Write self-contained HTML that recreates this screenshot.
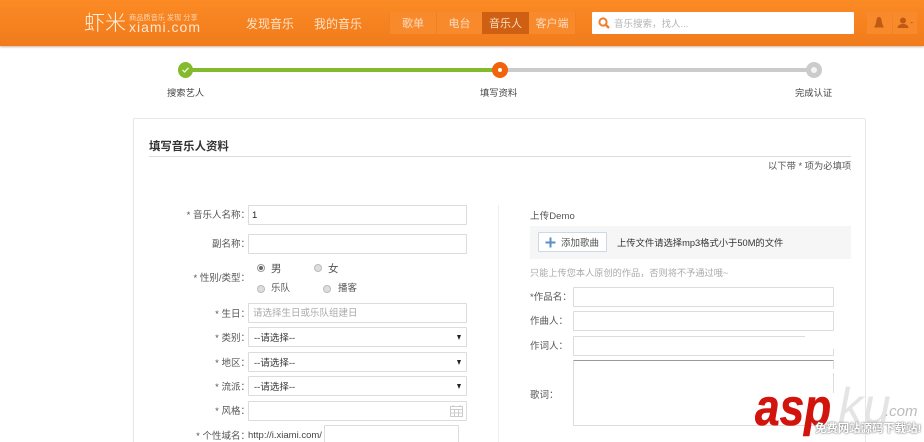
<!DOCTYPE html>
<html lang="zh"><head><meta charset="utf-8"><style>
*{box-sizing:border-box}
html,body{margin:0;padding:0;width:924px;height:442px;overflow:hidden;background:#fff;font-family:"Liberation Sans","Noto Sans CJK SC",sans-serif;color:#444;font-size:10px}
#p{position:relative;width:924px;height:442px;overflow:hidden;background:#fff}
.a{position:absolute;white-space:nowrap}
.hd{position:absolute;left:0;top:0;width:924px;height:46px;background:linear-gradient(#fb8a24,#f07b1c);box-shadow:0 1px 2px rgba(150,90,40,.45)}
.nav{color:#fde3c8;font-size:12px;line-height:16px;top:16px}
.tab{top:12px;height:22px;line-height:24px;text-align:center;font-size:11px;color:#fbdcc0;background:#f98a2c}
.lab{font-size:9.5px;line-height:12px;color:#555;text-align:right;width:86px;left:164px}
.in{position:absolute;background:#fff;border:1px solid #dcdcdc;border-radius:1px;height:20px}
.sel{font-size:9.5px;line-height:21px;color:#333;padding-left:5px}
.sel:after{content:"";position:absolute;right:5px;top:7px;border:2.500px solid transparent;border-top:5px solid #222;border-bottom:0}
.r{position:absolute;width:8px;height:8px;border-radius:50%;background:#ddd;border:1px solid #bbb}
.t{font-size:9.5px;line-height:12px;color:#555}
</style></head><body><div id="p">
<div class="hd"></div>
<div class="a" style="left:84px;top:11px;font-size:21px;line-height:26px;color:#fff0e0;font-weight:300">虾米</div>
<div class="a" style="left:129px;top:13px;font-size:7.200px;line-height:9px;color:#fcd9b8">商品质音乐 发现 分享</div>
<div class="a" style="left:129px;top:20px;font-size:14px;line-height:14px;color:#fde6cf;letter-spacing:1px">xiami.com</div>
<div class="a nav" style="left:246px">发现音乐</div>
<div class="a nav" style="left:314px">我的音乐</div>
<div class="a" style="left:389px;top:12px;width:187px;height:22px;background:#f37f20"></div>
<div class="a tab" style="left:390px;width:46px">歌单</div>
<div class="a tab" style="left:437px;width:45px">电台</div>
<div class="a tab" style="left:482px;width:47px;background:#cf5f12;color:#fbdcc0">音乐人</div>
<div class="a tab" style="left:529px;width:46px">客户端</div>
<div class="a" style="left:592px;top:12px;width:262px;height:22px;background:#fff;border-radius:1px"></div>
<svg class="a" style="left:597px;top:16px" width="14" height="14" viewBox="0 0 14 14"><circle cx="6" cy="6" r="3.600" fill="none" stroke="#f08030" stroke-width="2"/><path d="M8.600 8.600L12 12" stroke="#f08030" stroke-width="2.400"/></svg>
<div class="a" style="left:614px;top:19px;font-size:9.500px;line-height:12px;color:#b4b4b4">音乐搜索，找人...</div>
<div class="a" style="left:867px;top:12px;width:25px;height:22px;background:#f98a2c"></div>
<div class="a" style="left:893px;top:12px;width:24px;height:22px;background:#f98a2c"></div>
<svg class="a" style="left:872px;top:16px" width="14" height="14" viewBox="0 0 14 14"><path d="M7 1C5 1 4.500 3 4.200 5.500 4 8 3 9.500 2 11.500H12C11 9.500 10 8 9.800 5.500 9.500 3 9 1 7 1Z" fill="#bf5a14"/></svg>
<svg class="a" style="left:896px;top:16px" width="18" height="14" viewBox="0 0 18 14"><circle cx="7" cy="4.500" r="3" fill="#bf5a14"/><path d="M1.500 12C2 9 4 8 7 8s5 1 5.500 4Z" fill="#bf5a14"/><path d="M14.500 6h2.500l-1.250 1.500Z" fill="#bf5a14"/></svg>

<div class="a" style="left:190px;top:68px;width:312px;height:4px;background:#84bb2c"></div>
<div class="a" style="left:502px;top:68px;width:312px;height:4px;background:#cbcbcb"></div>
<div class="a" style="left:178px;top:62px;width:15px;height:16px;border-radius:50%;background:#84bb2c"></div>
<svg class="a" style="left:181px;top:66px" width="9" height="8" viewBox="0 0 9 8"><path d="M1.500 4L3.600 6 7.500 1.800" fill="none" stroke="#eef6dd" stroke-width="1.300"/></svg>
<div class="a" style="left:492px;top:62px;width:16px;height:16px;border-radius:50%;background:#f0640c"></div>
<div class="a" style="left:498px;top:68px;width:4px;height:4px;border-radius:50%;background:#fff"></div>
<div class="a" style="left:806px;top:62px;width:16px;height:16px;border-radius:50%;background:#cbcbcb"></div>
<div class="a" style="left:811px;top:67px;width:6px;height:6px;border-radius:50%;background:#f4f4f4"></div>
<div class="a t" style="left:167px;top:87px;color:#444;font-size:9.300px">搜索艺人</div>
<div class="a t" style="left:480px;top:87px;color:#444;font-size:9.300px">填写资料</div>
<div class="a t" style="left:795px;top:87px;color:#444;font-size:9.300px">完成认证</div>

<div class="a" style="left:133px;top:118px;width:733px;height:340px;border:1px solid #e6e6e6;border-radius:2px"></div>
<div class="a" style="left:149px;top:140px;font-size:11.400px;line-height:14px;color:#333;font-weight:bold">填写音乐人资料</div>
<div class="a" style="left:149px;top:156px;width:702px;height:1px;background:#ddd"></div>
<div class="a t" style="left:768px;top:160px;font-size:9.300px">以下带 * 项为必填项</div>
<div class="a" style="left:498px;top:205px;width:1px;height:237px;background:#eee"></div>

<div class="a lab" style="top:210px">* 音乐人名称：</div>
<div class="in" style="left:248px;top:205px;width:219px"></div>
<div class="a" style="left:252px;top:210px;font-size:9.500px;line-height:12px;color:#222">1</div>
<div class="a lab" style="top:239px">副名称：</div>
<div class="in" style="left:248px;top:234px;width:219px"></div>
<div class="a lab" style="top:273px">* 性别/类型：</div>
<div class="r" style="left:257px;top:264px;background:#fff;border-color:#999"></div>
<div class="a" style="left:259px;top:266px;width:4px;height:4px;border-radius:50%;background:#666"></div>
<div class="a t" style="left:271px;top:263px;font-size:10.500px">男</div>
<div class="r" style="left:314px;top:264px"></div>
<div class="a t" style="left:328px;top:263px;font-size:10.500px">女</div>
<div class="r" style="left:257px;top:285px"></div>
<div class="a t" style="left:271px;top:283px">乐队</div>
<div class="r" style="left:323px;top:285px"></div>
<div class="a t" style="left:338px;top:283px">播客</div>
<div class="a lab" style="top:309px">* 生日：</div>
<div class="in" style="left:248px;top:303px;width:219px;font-size:9.500px;line-height:19px;color:#aaa;padding-left:4px">请选择生日或乐队组建日</div>
<div class="a lab" style="top:333px">* 类别：</div>
<div class="in sel" style="left:248px;top:327px;width:219px">--请选择--</div>
<div class="a lab" style="top:358px">* 地区：</div>
<div class="in sel" style="left:248px;top:352px;width:219px">--请选择--</div>
<div class="a lab" style="top:382px">* 流派：</div>
<div class="in sel" style="left:248px;top:376px;width:219px">--请选择--</div>
<div class="a lab" style="top:406px">* 风格：</div>
<div class="in" style="left:248px;top:401px;width:219px"></div>
<svg class="a" style="left:449px;top:404px" width="15" height="14" viewBox="0 0 15 14"><path d="M1.500 2.500h12v10h-12zM1.500 5.500h12M5.500 5.500v7M9.500 5.500v7M1.500 9h12M4 1v2M11 1v2" fill="none" stroke="#ccc"/></svg>
<div class="a lab" style="top:431px">* 个性域名：</div>
<div class="a" style="left:248px;top:430px;font-size:9.500px;line-height:12px;color:#444">http://i.xiami.com/</div>
<div class="in" style="left:324px;top:425px;width:135px;height:24px"></div>

<div class="a t" style="left:530px;top:211px;letter-spacing:.1px">上传Demo</div>
<div class="a" style="left:530px;top:226px;width:321px;height:33px;background:#f6f6f6"></div>
<div class="a" style="left:538px;top:232px;width:69px;height:20px;background:#fff;border:1px solid #cdd8e6;border-radius:1px"></div>
<svg class="a" style="left:545px;top:237px" width="11" height="11" viewBox="0 0 11 11"><path d="M5.500 .5v10M.5 5.500h10" stroke="#5b8fc4" stroke-width="2"/></svg>
<div class="a t" style="left:561px;top:238px">添加歌曲</div>
<div class="a t" style="left:617px;top:237px;color:#333;font-size:9.300px">上传文件请选择mp3格式小于50M的文件</div>
<div class="a t" style="left:530px;top:267px;color:#aaa;font-size:9.200px">只能上传您本人原创的作品，否则将不予通过哦~</div>
<div class="a t" style="left:530px;top:292px">*作品名：</div>
<div class="in" style="left:573px;top:287px;width:261px"></div>
<div class="a t" style="left:530px;top:316px">作曲人：</div>
<div class="in" style="left:573px;top:311px;width:261px"></div>
<div class="a t" style="left:530px;top:341px">作词人：</div>
<div class="in" style="left:573px;top:336px;width:261px"></div>
<div class="a t" style="left:530px;top:390px">歌词：</div>
<div class="in" style="left:573px;top:360px;width:261px;height:66px;border-top-color:#999"></div>
<div class="a" style="left:805px;top:335px;width:30px;height:2px;background:#fff"></div>
<div class="a" style="left:830px;top:337px;width:6px;height:12px;background:#fff"></div>
<div class="a" style="left:830px;top:369px;width:6px;height:4px;background:#fff"></div>
<div class="a" style="left:830px;top:393px;width:6px;height:34px;background:#fff"></div>

<div class="a" style="left:755px;top:381px;font-size:52px;line-height:54px;font-weight:bold;font-style:italic;color:#d2140c;-webkit-text-stroke:.6px #d2140c;transform:scaleX(.85);transform-origin:0 0">asp</div>
<div class="a" style="left:838px;top:379px;font-size:50px;line-height:54px;font-style:italic;color:#e4e4e4">ku</div>
<div class="a" style="left:885px;top:402px;font-size:15px;line-height:20px;font-style:italic;color:#bbb">.com</div>
<div class="a" style="left:815px;top:422px;font-size:11.400px;line-height:14px;color:#fff;font-weight:bold;text-shadow:0 0 2px #777,0 0 1px #777">免费网站源码下载站!</div>
</div></body></html>
